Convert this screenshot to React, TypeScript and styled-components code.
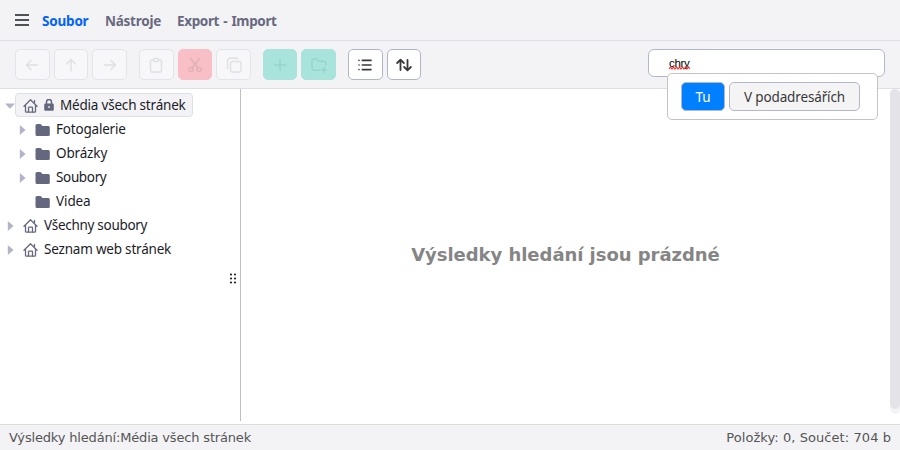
import React from "react";
import styled, { createGlobalStyle, css } from "styled-components";

const GlobalStyle = createGlobalStyle`
  *, *::before, *::after { box-sizing: border-box; }
  html, body { margin: 0; height: 100%; background: #fff; overflow: hidden; }
  body { font-family: "Noto Sans", "Open Sans", sans-serif; color: #1c1c28; }
`;

const Page = styled.div`
  position: relative;
  width: 900px;
  height: 450px;
  display: flex;
  flex-direction: column;
  overflow: hidden;
  background: #fff;
`;

const MenuBar = styled.nav`
  flex: 0 0 41px;
  display: flex;
  align-items: center;
  padding-left: 14px;
  background: #f3f3f6;
  border-bottom: 1px solid #dddfe8;
`;

const MenuIcon = styled.svg`
  display: block;
  width: 16px;
  height: 14px;
  margin-right: 12px;
`;

const MenuItem = styled.a<{ $width: number; $spacing: number; $active?: boolean }>`
  width: ${(p) => p.$width}px;
  margin-right: 16px;
  padding-top: 1px;
  font-size: 13.5px;
  font-weight: 700;
  line-height: 20px;
  white-space: nowrap;
  letter-spacing: ${(p) => p.$spacing}px;
  word-spacing: 1px;
  color: ${(p) => (p.$active ? "#0063fb" : "#68697f")};
`;

const Toolbar = styled.div`
  flex: 0 0 48px;
  display: flex;
  align-items: flex-start;
  padding: 8px 15px 0;
  background: #f3f3f6;
  border-bottom: 1px solid #dddfe8;
`;

const ButtonGroup = styled.div`
  display: flex;
  gap: 4px;
  margin-right: 12px;
`;

type Tone = "plain" | "danger" | "success" | "enabled";

const tones = {
  plain: css`background: #f7f7f9; border-color: #e3e4e9; color: #dfe0e3;`,
  danger: css`background: #f8c0c6; border-color: #f8c0c6; color: #e0b0b7;`,
  success: css`background: #a9e4dc; border-color: #a9e4dc; color: #98d2cb;`,
  enabled: css`background: #fff; border-color: #b2b5c9; color: #393939;`,
};

const ToolButton = styled.button<{ $tone: Tone }>`
  display: flex;
  align-items: center;
  justify-content: center;
  width: 34.65px;
  height: 31px;
  padding: 0;
  border: 1px solid;
  border-radius: 5px;
  ${(p) => tones[p.$tone]}
  svg { display: block; width: 16px; height: 16px; fill: none; stroke: currentColor; stroke-width: 1.4; stroke-linecap: round; stroke-linejoin: round; }
`;

const SearchField = styled.div`
  width: 237px;
  height: 28px;
  margin-left: auto;
  padding-left: 20px;
  background: #fff;
  border: 1px solid #b2b8cc;
  border-radius: 6px;
`;

const SearchText = styled.span`
  position: relative;
  display: inline-block;
  font: 11.5px/26px "Liberation Sans", Arial, sans-serif;
  letter-spacing: -0.3px;
  color: #000;
`;

const Squiggle = styled.svg`
  position: absolute;
  left: 0;
  top: 16px;
  width: 21px;
  height: 4px;
`;

const SearchPopup = styled.div`
  position: absolute;
  left: 667px;
  top: 73px;
  width: 211px;
  height: 47px;
  display: flex;
  gap: 4px;
  padding: 8px 13px;
  background: #fff;
  border: 1px solid #c4c4c7;
  border-radius: 5px;
`;

const ScopeButton = styled.button<{ $width: number; $selected?: boolean }>`
  width: ${(p) => p.$width}px;
  height: 29px;
  padding: 2px 0 0;
  border: 1px solid #b2b8cc;
  border-radius: 5px;
  background: ${(p) => (p.$selected ? "#007fff" : "#f4f4f5")};
  color: ${(p) => (p.$selected ? "#fff" : "#393939")};
  font: 13.5px/25px "Noto Sans", sans-serif;
  letter-spacing: -0.15px;
  white-space: nowrap;
`;

const Body = styled.main`
  flex: 0 0 335px;
  display: flex;
`;

const Sidebar = styled.aside`
  width: 241px;
  height: 332px;
  padding-top: 4px;
  border-right: 1px solid #bfbfc3;
  display: flex;
  flex-direction: column;
`;

const TreeRow = styled.div<{ $indent: number }>`
  display: flex;
  align-items: center;
  height: 24px;
  padding-left: ${(p) => p.$indent}px;
`;

const Toggle = styled.svg`
  display: block;
  flex: none;
  width: 10px;
  height: 10px;
  margin-top: 2px;
  fill: #b2b5c9;
`;

const Node = styled.div<{ $selected?: boolean }>`
  display: flex;
  align-items: center;
  height: 24px;
  padding: 0 7px;
  border: 1px solid ${(p) => (p.$selected ? "#dcdfec" : "transparent")};
  border-radius: 4px;
  background: ${(p) => (p.$selected ? "#f3f3f6" : "transparent")};
  ${(p) => p.$selected && "width: 178px;"}
`;

const NodeLabel = styled.span<{ $spacing: number }>`
  font-size: 13.5px;
  line-height: 22px;
  letter-spacing: ${(p) => p.$spacing}px;
  white-space: nowrap;
  color: #1c1c28;
`;

const NodeIcon = styled.svg<{ $gap: number }>`
  display: block;
  flex: none;
  margin-right: ${(p) => p.$gap}px;
`;

const DragHandle = styled.svg`
  display: block;
  width: 8px;
  height: 12px;
  margin: 11px 3px 0 auto;
  fill: #222;
`;

const Results = styled.section`
  flex: 1;
  display: flex;
  align-items: center;
  justify-content: center;
  padding-bottom: 4px;
`;

const EmptyMessage = styled.h2`
  margin: 0;
  font: 700 18px/24px "DejaVu Sans", Verdana, sans-serif;
  letter-spacing: -0.04px;
  color: #858585;
  white-space: nowrap;
`;

const ScrollTrack = styled.div`
  width: 10px;
  height: 325px;
  background: #f3f3f6;
  border-radius: 5px;
`;

const ScrollThumb = styled.div`
  height: 320px;
  background: #e3e3e8;
  border-radius: 5px;
`;

const StatusBar = styled.footer`
  flex: 0 0 25px;
  display: flex;
  justify-content: space-between;
  padding: 0 9px;
  background: #f3f3f6;
  border-top: 1px solid #dcdcdd;
  border-bottom: 1px solid #dfe0ea;
  font: 13px/25px "DejaVu Sans", Verdana, sans-serif;
  color: #555;
`;

const StatusText = styled.span<{ $spacing: number }>`
  letter-spacing: ${(p) => p.$spacing}px;
  white-space: nowrap;
`;

const icons = {
  back: <path d="M13.500 8H2.500M7 3.500 2.500 8 7 12.500" />,
  up: <path d="M8 14V2.500M3.500 7 8 2.500 12.500 7" />,
  forward: <path d="M2.500 8h11M9 3.500 13.500 8 9 12.500" />,
  paste: <path d="M5.500 3H4a1.500 1.500 0 0 0-1.500 1.500v9A1.500 1.500 0 0 0 4 15h8a1.500 1.500 0 0 0 1.500-1.500v-9A1.500 1.500 0 0 0 12 3h-1.500M6.500 1.500h3a1 1 0 0 1 1 1v1a1 1 0 0 1-1 1h-3a1 1 0 0 1-1-1v-1a1 1 0 0 1 1-1Z" />,
  cut: <><path d="M3.500 1.500 11 11M12.500 1.500 5 11" /><circle cx="4" cy="12.500" r="2.100" /><circle cx="12" cy="12.500" r="2.100" /></>,
  copy: <><rect x="4.500" y="4.500" width="10.500" height="10.500" rx="2" /><path d="M2 11.500a1 1 0 0 1-.500-1V3.500A2.200 2.200 0 0 1 3.700 1.300h7a1.400 1.400 0 0 1 1 .500" /></>,
  add: <path d="M8 2.500v11M2.500 8h11" />,
  newFolder: <path d="M9 13.300H2.500A1.500 1.500 0 0 1 1 11.800V3.500A1.500 1.500 0 0 1 2.500 2H5.500l2 2.300h5.700a1.500 1.500 0 0 1 1.500 1.500V8M13 10.300v5M10.500 12.800h5" />,
  list: <path strokeWidth="1.600" d="M5.300 3.400h8.700M5.300 8h8.700M5.300 12.600h8.700M2 3.400h.01M2 8h.01M2 12.600h.01" />,
  sort: <path strokeWidth="1.800" d="M4.500 13V3M1.200 6 4.500 2.700 7.800 6M11.500 3v10M8.200 10l3.300 3.300L14.800 10" />,
};

const toolGroups: { icon: keyof typeof icons; tone: Tone; label: string }[][] = [
  [
    { icon: "back", tone: "plain", label: "Zpět" },
    { icon: "up", tone: "plain", label: "Nahoru" },
    { icon: "forward", tone: "plain", label: "Vpřed" },
  ],
  [
    { icon: "paste", tone: "plain", label: "Vložit" },
    { icon: "cut", tone: "danger", label: "Vyjmout" },
    { icon: "copy", tone: "plain", label: "Kopírovat" },
  ],
  [
    { icon: "add", tone: "success", label: "Přidat" },
    { icon: "newFolder", tone: "success", label: "Nová složka" },
  ],
  [
    { icon: "list", tone: "enabled", label: "Seznam" },
    { icon: "sort", tone: "enabled", label: "Seřadit" },
  ],
];

type TreeItem = {
  label: string;
  spacing: number;
  level: number;
  kind: "home" | "folder";
  state: "open" | "closed" | "leaf";
  selected?: boolean;
};

const tree: TreeItem[] = [
  { label: "Média všech stránek", spacing: -0.2, level: 0, kind: "home", state: "open", selected: true },
  { label: "Fotogalerie", spacing: -0.2, level: 1, kind: "folder", state: "closed" },
  { label: "Obrázky", spacing: -0.15, level: 1, kind: "folder", state: "closed" },
  { label: "Soubory", spacing: -0.35, level: 1, kind: "folder", state: "closed" },
  { label: "Videa", spacing: -0.1, level: 1, kind: "folder", state: "leaf" },
  { label: "Všechny soubory", spacing: -0.3, level: 0, kind: "home", state: "closed" },
  { label: "Seznam web stránek", spacing: -0.2, level: 0, kind: "home", state: "closed" },
];

const HomeIcon = () => (
  <NodeIcon $gap={6} width="15" height="16" viewBox="0 0 15 16" fill="none" stroke="#68697f" strokeWidth="1.300" strokeLinejoin="round" strokeLinecap="round">
    <path d="M1 9.200 7.500 2.700 14 9.200M2.500 8V14.400a.8.8 0 0 0 .8.8h8.400a.8.8 0 0 0 .8-.8V8" />
    <path d="M5.500 15v-4.200a.6.6 0 0 1 .6-.6h2.800a.6.6 0 0 1 .6.6V15M11.500 3.500v2" />
  </NodeIcon>
);

const FolderIcon = () => (
  <NodeIcon $gap={6} width="15" height="13" viewBox="0 0 15 13" fill="#65677e">
    <path d="M2 1h3.500l2 2h5.800A1.500 1.500 0 0 1 14.800 4.500v7a1.500 1.500 0 0 1-1.500 1.500H2A1.500 1.500 0 0 1 .5 11.500V2.500A1.500 1.500 0 0 1 2 1Z" />
  </NodeIcon>
);

const LockIcon = () => (
  <NodeIcon $gap={6} width="10" height="13" viewBox="0 0 10 13">
    <path d="M2.500 5.500V3a2.500 2.500 0 0 1 5 0V5.500" fill="none" stroke="#65677e" strokeWidth="1.500" />
    <rect x=".2" y="4.500" width="9.600" height="7.200" rx="1.200" fill="#65677e" />
    <path d="M5 7v2" stroke="#f3f3f6" strokeWidth="1.300" />
  </NodeIcon>
);

export default function App() {
  return (
    <>
      <GlobalStyle />
      <Page>
        <MenuBar>
          <MenuIcon viewBox="0 0 16 14" stroke="#1c1c24" strokeWidth="1.500">
            <path d="M1 2h14M1 7h14M1 12h14" />
          </MenuIcon>
          <MenuItem $width={47} $spacing={-0.2} $active>Soubor</MenuItem>
          <MenuItem $width={56} $spacing={-0.25}>Nástroje</MenuItem>
          <MenuItem $width={100} $spacing={-0.35}>Export - Import</MenuItem>
        </MenuBar>
        <Toolbar>
          {toolGroups.map((group, i) => (
            <ButtonGroup key={i}>
              {group.map((tool) => (
                <ToolButton key={tool.icon} $tone={tool.tone} aria-label={tool.label}>
                  <svg viewBox="0 0 16 16">{icons[tool.icon]}</svg>
                </ToolButton>
              ))}
            </ButtonGroup>
          ))}
          <SearchField>
            <SearchText>
              chry
              <Squiggle viewBox="0 0 21 4" fill="none" stroke="#f0352f" strokeWidth="1.200">
                <path d="M0 3 1.500 1 3 3 4.500 1 6 3 7.500 1 9 3 10.500 1 12 3 13.500 1 15 3 16.500 1 18 3 19.500 1 21 3" />
              </Squiggle>
            </SearchText>
          </SearchField>
        </Toolbar>
        <Body>
          <Sidebar>
            {tree.map((item) => (
              <TreeRow key={item.label} $indent={item.level ? 17 : 5}>
                <Toggle viewBox="0 0 10 10">
                  {item.state === "open" && <path d="M0 2.500h10L5 7.800Z" />}
                  {item.state === "closed" && <path d="M2.800 0v10L8.600 5Z" />}
                </Toggle>
                <Node $selected={item.selected}>
                  {item.kind === "home" ? <HomeIcon /> : <FolderIcon />}
                  {item.selected && <LockIcon />}
                  <NodeLabel $spacing={item.spacing}>{item.label}</NodeLabel>
                </Node>
              </TreeRow>
            ))}
            <DragHandle viewBox="0 0 8 12">
              {[2, 6].map((x) => [2.5, 6.5, 10.5].map((y) => <circle key={`${x}-${y}`} cx={x} cy={y} r="1.1" />))}
            </DragHandle>
          </Sidebar>
          <Results>
            <EmptyMessage>Výsledky hledání jsou prázdné</EmptyMessage>
          </Results>
          <ScrollTrack>
            <ScrollThumb />
          </ScrollTrack>
        </Body>
        <StatusBar>
          <StatusText $spacing={-0.17}>Výsledky hledání:Média všech stránek</StatusText>
          <StatusText $spacing={0.07}>Položky: 0, Součet: 704 b</StatusText>
        </StatusBar>
        <SearchPopup>
          <ScopeButton $width={44} $selected>Tu</ScopeButton>
          <ScopeButton $width={131}>V podadresářích</ScopeButton>
        </SearchPopup>
      </Page>
    </>
  );
}
